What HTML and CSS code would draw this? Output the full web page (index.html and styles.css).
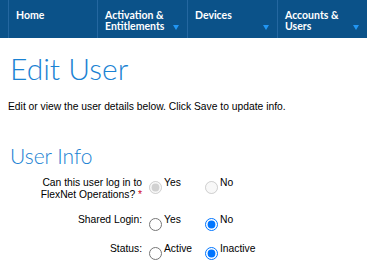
FILE: index.html
```html
<!DOCTYPE html>
<html lang="en">
<head>
    <meta charset="UTF-8">
    <meta name="viewport" content="width=device-width, initial-scale=1.0">
    <title>Edit User</title>
    <link rel="stylesheet" href="styles.css">
</head>
<body>
    <!-- top navigation -->
    <nav class="topnav">
        <a href="#" class="nav-item">
            <span class="nav-label">Home</span>
        </a>
        <a href="#" class="nav-item">
            <span class="nav-label">Activation &amp;<br>Entitlements</span>
            <span class="nav-arrow"></span>
        </a>
        <a href="#" class="nav-item">
            <span class="nav-label">Devices</span>
            <span class="nav-arrow"></span>
        </a>
        <a href="#" class="nav-item">
            <span class="nav-label">Accounts &amp;<br>Users</span>
            <span class="nav-arrow"></span>
        </a>
    </nav>

    <div class="page">
        <h1 class="page-title">Edit User</h1>
        <p class="intro">Edit or view the user details below. Click Save to update info.</p>

        <h2 class="section-title">User Info</h2>

        <form class="user-form">
            <div class="form-row row-login">
                <label class="form-label">Can this user log in to FlexNet Operations?&nbsp;<span class="req">*</span></label>
                <div class="options">
                    <label class="option"><input type="radio" name="canLogin" checked disabled> Yes</label>
                    <label class="option"><input type="radio" name="canLogin" disabled> No</label>
                </div>
            </div>

            <div class="form-row row-shared">
                <label class="form-label">Shared Login:</label>
                <div class="options">
                    <label class="option"><input type="radio" name="shared"> Yes</label>
                    <label class="option"><input type="radio" name="shared" checked> No</label>
                </div>
            </div>

            <div class="form-row">
                <label class="form-label">Status:</label>
                <div class="options">
                    <label class="option"><input type="radio" name="status"> Active</label>
                    <label class="option"><input type="radio" name="status" checked> Inactive</label>
                </div>
            </div>
        </form>
    </div>
</body>
</html>
```

FILE: styles.css
```css
* {
    margin: 0;
    padding: 0;
    box-sizing: border-box;
}

body {
    font-family: 'Liberation Sans', Arial, sans-serif;
    font-size: 10.3px;
    color: #000;
    background-color: #fff;
}

/* 상단 네비게이션 */
.topnav {
    display: flex;
    height: 38px;
    padding-left: 8px;
    background-color: #0b5289;
}

.nav-item {
    display: flex;
    justify-content: space-between;
    align-items: flex-end;
    width: 90px;
    padding: 10px 8px 8px 7px;
    border-left: 1px solid #2467a0;
    color: #fff;
    text-decoration: none;
    font-family: 'Lato', sans-serif;
    font-weight: bold;
    font-size: 10.5px;
    line-height: 11px;
}

.nav-item:first-child {
    width: 89px;
}

.nav-label {
    align-self: flex-start;
}

.nav-arrow {
    width: 0;
    height: 0;
    border-left: 3px solid transparent;
    border-right: 3px solid transparent;
    border-top: 5px solid #2196f3;
}

.page {
    padding: 0 8px;
}

.page-title {
    margin-top: 12px;
    padding-left: 2px;
    font-family: 'Lato', sans-serif;
    font-weight: 300;
    font-size: 30px;
    line-height: 36px;
    color: #1a82d3;
}

.intro {
    margin-top: 14px;
    line-height: 13px;
}

.section-title {
    margin-top: 30px;
    padding-left: 2px;
    font-family: 'Lato', sans-serif;
    font-weight: 300;
    font-size: 21px;
    line-height: 25px;
    color: #1a82d3;
}

.user-form {
    margin-top: 9px;
}

.form-row {
    display: grid;
    grid-template-columns: 134px auto;
    column-gap: 7px;
    line-height: 12px;
    margin-bottom: 12px;
}

.row-login {
    margin-bottom: 13px;
}

.form-label {
    text-align: right;
}

.req {
    color: #d0021b;
}

.options {
    display: flex;
}

.option {
    display: flex;
    align-items: flex-start;
    width: 56px;
}

.option input {
    width: 13px;
    height: 13px;
    margin: 4px 2px 0 0;
}
```
